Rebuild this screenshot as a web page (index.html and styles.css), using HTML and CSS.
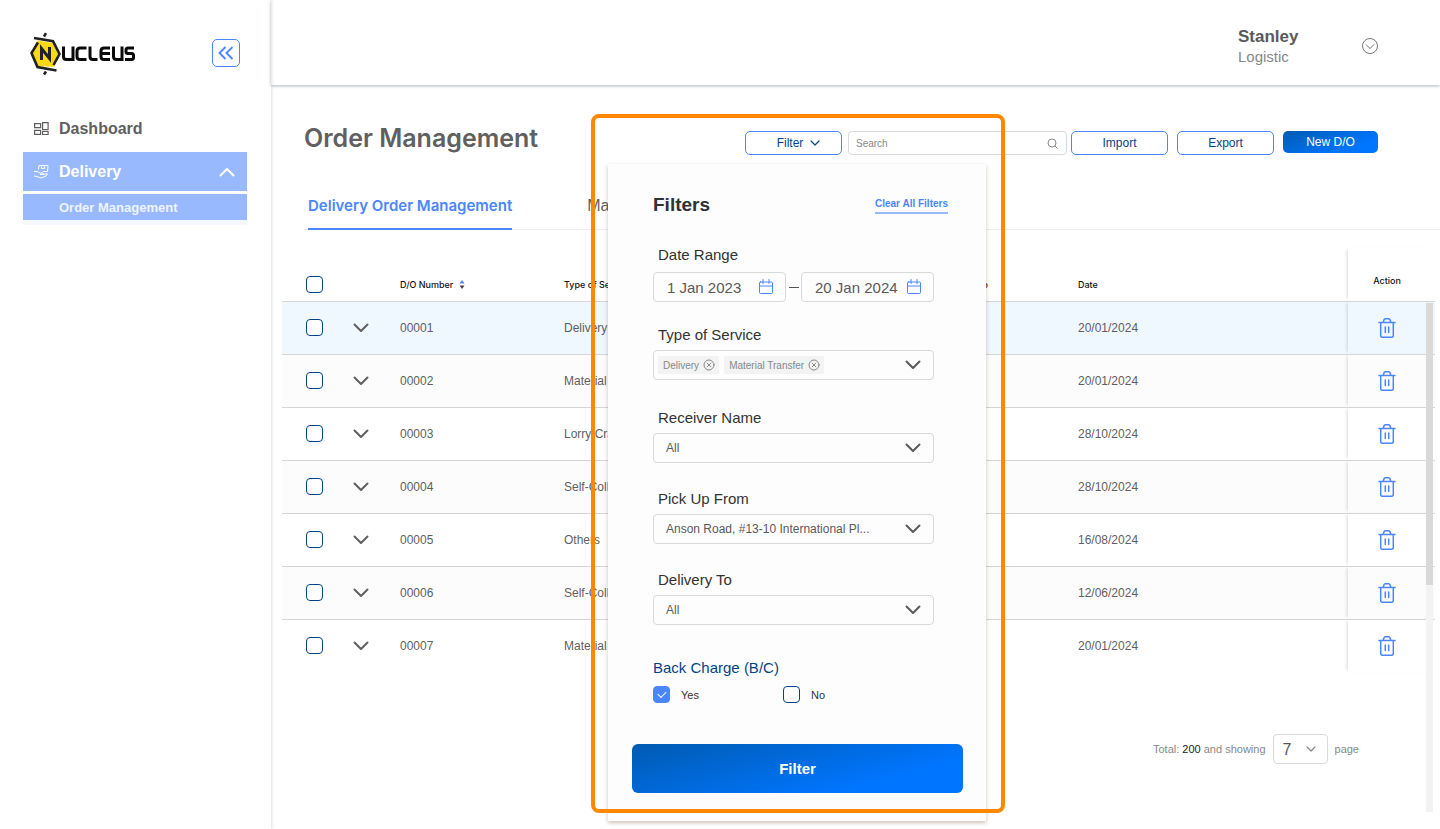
FILE: index.html
```html
<!DOCTYPE html>
<html lang="en">
<head>
<meta charset="utf-8">
<title>Order Management</title>
<link rel="stylesheet" href="styles.css">
</head>
<body>
<svg class="sprite" aria-hidden="true">
  <symbol id="chevron" viewBox="0 0 16 10"><path d="M1.500 1.500 8 8l6.500-6.500" fill="none" stroke="currentColor" stroke-width="2" stroke-linecap="round" stroke-linejoin="round"/></symbol>
  <symbol id="chevron-thin" viewBox="0 0 10 6"><path d="M1 1l4 4 4-4" fill="none" stroke="currentColor" stroke-width="1.200" stroke-linecap="round" stroke-linejoin="round"/></symbol>
  <symbol id="calendar" viewBox="0 0 14 16"><path d="M1.500 3h11q1 0 1 1v9.500q0 1-1 1h-11q-1 0-1-1V4q0-1 1-1zM.5 7h13M4 .5v4M10 .5v4" fill="none" stroke="currentColor" stroke-linecap="round"/></symbol>
  <symbol id="clear" viewBox="0 0 12 12"><g fill="none" stroke="currentColor" stroke-linecap="round"><circle cx="6" cy="6" r="5"/><path d="M4.200 4.200l3.600 3.600M7.800 4.200 4.200 7.800"/></g></symbol>
  <symbol id="trash" viewBox="0 0 18 20"><g fill="none" stroke="currentColor" stroke-width="1.500" stroke-linecap="round" stroke-linejoin="round"><path d="M1 4.500h16M2.700 4.700v12.500q0 2 1.500 2h9.600q1.500 0 1.500-2V4.700M5.200 4.300l.8-2.500q.3-1 1.300-1h3.400q1 0 1.300 1l.8 2.500M7.300 9v5.500M10.700 9v5.500"/></g></symbol>
</svg>
<div class="app">
  <aside class="sidebar">
    <div class="brand">
      <a class="logo" href="#" aria-label="Nucleus">
        <svg class="logo-mark" viewBox="0 0 106 44" aria-hidden="true">
          <path d="M7 9.500 23 12l7 11-6 13-16-1L2 22z" fill="#fbd916"/>
          <path d="M4 7 23 10.200 29.500 23 23.500 34M8 11.500 1.500 22l6 14 19 3.500M16 2.200l-2 3.300M16 40.500l-2 3" fill="none" stroke="#222" stroke-width="2.600"/>
          <path d="M11.500 29V17.500l8 10V16" fill="none" stroke="#222" stroke-width="3"/>
          <path d="M33.500 15.500v10q0 3 3 3h6.500v-13M56.500 17h-6.500q-3 0-3 3v5.500q0 3 3 3h6.500M60 15.500v10q0 3 3 3h4.500M80 17h-6q-3 0-3 3v5.500q0 3 3 3h6M71 22.500h9M83.500 15.500v10q0 3 3 3h5.500v-13M104 17h-6q-2 0-2 2v1.500q0 2 2 2h3.500q2 0 2 2v2q0 2-2 2h-6.500" fill="none" stroke="#0a0a0a" stroke-width="3"/>
        </svg>
      </a>
      <button class="collapse" aria-label="Collapse sidebar"><svg width="16" height="14" viewBox="0 0 16 14"><path d="M7.500 1 1.500 7l6 6M14.500 1l-6 6 6 6" fill="none" stroke="currentColor" stroke-width="1.800"/></svg></button>
    </div>
    <nav class="menu">
      <a class="menu-item" href="#"><svg width="15" height="13" viewBox="0 0 15 13" fill="none" stroke="currentColor" stroke-width="1.200"><path d="M.6 1.600h6v4h-6zM.6 8.400h6v4h-6zM8.600.6h5.500v7H8.600zM8.600 9.500h5.500v3H8.600z"/></svg>Dashboard</a>
      <a class="menu-item active" href="#"><svg width="15" height="14" viewBox="0 0 15 14" fill="none" stroke="currentColor"><path d="M4.500 4.500l.5-4h9l-.5 6H9M7.500.5v3h3v-3M0 6.500h3l3 1.500h3q1 1-1 1.500H6M0 11l3 .5 4 1.500 5-2 1.500-2q0-1-2 0l-2.500.5"/></svg>Delivery<svg class="menu-arrow" width="16" height="10"><use href="#chevron"/></svg></a>
      <a class="menu-sub" href="#">Order Management</a>
    </nav>
  </aside>
  <div class="main">
    <header class="topbar">
      <div class="user"><strong>Stanley</strong><span>Logistic</span></div>
      <button class="user-toggle" aria-label="Account menu"><svg width="16" height="16" viewBox="0 0 16 16" fill="none" stroke="currentColor"><circle cx="8" cy="8" r="7.500"/><path d="M4 6.500l4 4 4-4"/></svg></button>
    </header>
    <main class="content">
      <div class="page-head">
        <h1>Order Management</h1>
        <div class="tools">
          <button class="btn btn-filter">Filter<svg width="10" height="6"><use href="#chevron-thin"/></svg></button>
          <label class="search"><input type="search" placeholder="Search" aria-label="Search"><svg width="11" height="11" viewBox="0 0 11 11" fill="none" stroke="currentColor"><circle cx="5" cy="5" r="4"/><path d="M8 8l2.500 2.500"/></svg></label>
          <button class="btn btn-import">Import</button>
          <button class="btn btn-export">Export</button>
          <button class="btn btn-primary">New D/O</button>
          <form class="filters">
            <div class="filters-head"><h2>Filters</h2><a href="#">Clear All Filters</a></div>
            <fieldset class="field dates">
              <legend>Date Range</legend>
              <div class="date-row">
                <label class="box"><input type="text" value="1 Jan 2023" aria-label="From date"><svg width="14" height="16"><use href="#calendar"/></svg></label>
                <span class="dash"></span>
                <label class="box"><input type="text" value="20 Jan 2024" aria-label="To date"><svg width="14" height="16"><use href="#calendar"/></svg></label>
              </div>
            </fieldset>
            <div class="field service">
              <span class="field-label" id="service-label">Type of Service</span>
              <div class="box tags" role="group" aria-labelledby="service-label">
                <span class="tag">Delivery<button type="button" aria-label="Remove Delivery"><svg width="12" height="12"><use href="#clear"/></svg></button></span>
                <span class="tag">Material Transfer<button type="button" aria-label="Remove Material Transfer"><svg width="12" height="12"><use href="#clear"/></svg></button></span>
                <button type="button" class="open" aria-label="Show services"><svg width="16" height="10"><use href="#chevron"/></svg></button>
              </div>
            </div>
            <div class="field receiver">
              <label class="field-label" for="receiver">Receiver Name</label>
              <div class="box pick"><select id="receiver"><option>All</option></select><svg width="16" height="10"><use href="#chevron"/></svg></div>
            </div>
            <div class="field">
              <label class="field-label" for="pickup">Pick Up From</label>
              <div class="box pick"><select id="pickup"><option>Anson Road, #13-10 International Pl...</option></select><svg width="16" height="10"><use href="#chevron"/></svg></div>
            </div>
            <div class="field">
              <label class="field-label" for="deliver">Delivery To</label>
              <div class="box pick"><select id="deliver"><option>All</option></select><svg width="16" height="10"><use href="#chevron"/></svg></div>
            </div>
            <fieldset class="charge">
              <legend>Back Charge (B/C)</legend>
              <div class="charge-row">
                <label><input type="checkbox" class="check" checked>Yes</label>
                <label><input type="checkbox" class="check">No</label>
              </div>
            </fieldset>
            <button type="button" class="apply">Filter</button>
          </form>
          <div class="highlight"></div>
        </div>
      </div>
      <nav class="tabs"><a class="tab current" href="#">Delivery Order Management</a><a class="tab" href="#">Material</a></nav>
      <div class="table-area">
        <table>
          <colgroup><col class="c-check"><col class="c-open"><col class="c-number"><col class="c-type"><col class="c-to"><col class="c-date"><col class="c-action"></colgroup>
          <thead><tr><th><input type="checkbox" class="check" aria-label="Select all"></th><th></th><th>D/O Number<svg class="sort" width="6" height="9" viewBox="0 0 6 9"><path d="M3 0l2.500 3.500h-5z" fill="#4a86ff"/><path d="M3 9l2.500-3.500h-5z" fill="#444"/></svg></th><th>Type of Service</th><th class="to">Delivery To</th><th>Date</th><th class="action">Action</th></tr></thead>
          <tbody>
            <tr class="selected"><td><input type="checkbox" class="check" aria-label="Select 00001"></td><td><button class="icon" aria-label="Expand 00001"><svg width="16" height="10"><use href="#chevron"/></svg></button></td><td>00001</td><td>Delivery</td><td></td><td>20/01/2024</td><td class="action"><button class="icon trash" aria-label="Delete 00001"><svg width="18" height="20"><use href="#trash"/></svg></button></td></tr>
            <tr><td><input type="checkbox" class="check" aria-label="Select 00002"></td><td><button class="icon" aria-label="Expand 00002"><svg width="16" height="10"><use href="#chevron"/></svg></button></td><td>00002</td><td>Material Transfer</td><td></td><td>20/01/2024</td><td class="action"><button class="icon trash" aria-label="Delete 00002"><svg width="18" height="20"><use href="#trash"/></svg></button></td></tr>
            <tr><td><input type="checkbox" class="check" aria-label="Select 00003"></td><td><button class="icon" aria-label="Expand 00003"><svg width="16" height="10"><use href="#chevron"/></svg></button></td><td>00003</td><td>Lorry Crane</td><td></td><td>28/10/2024</td><td class="action"><button class="icon trash" aria-label="Delete 00003"><svg width="18" height="20"><use href="#trash"/></svg></button></td></tr>
            <tr><td><input type="checkbox" class="check" aria-label="Select 00004"></td><td><button class="icon" aria-label="Expand 00004"><svg width="16" height="10"><use href="#chevron"/></svg></button></td><td>00004</td><td>Self-Collect</td><td></td><td>28/10/2024</td><td class="action"><button class="icon trash" aria-label="Delete 00004"><svg width="18" height="20"><use href="#trash"/></svg></button></td></tr>
            <tr><td><input type="checkbox" class="check" aria-label="Select 00005"></td><td><button class="icon" aria-label="Expand 00005"><svg width="16" height="10"><use href="#chevron"/></svg></button></td><td>00005</td><td>Others</td><td></td><td>16/08/2024</td><td class="action"><button class="icon trash" aria-label="Delete 00005"><svg width="18" height="20"><use href="#trash"/></svg></button></td></tr>
            <tr><td><input type="checkbox" class="check" aria-label="Select 00006"></td><td><button class="icon" aria-label="Expand 00006"><svg width="16" height="10"><use href="#chevron"/></svg></button></td><td>00006</td><td>Self-Collect</td><td></td><td>12/06/2024</td><td class="action"><button class="icon trash" aria-label="Delete 00006"><svg width="18" height="20"><use href="#trash"/></svg></button></td></tr>
            <tr><td><input type="checkbox" class="check" aria-label="Select 00007"></td><td><button class="icon" aria-label="Expand 00007"><svg width="16" height="10"><use href="#chevron"/></svg></button></td><td>00007</td><td>Material Transfer</td><td></td><td>20/01/2024</td><td class="action"><button class="icon trash" aria-label="Delete 00007"><svg width="18" height="20"><use href="#trash"/></svg></button></td></tr>
          </tbody>
        </table>
        <div class="pager"><label for="per-page">Total: <b>200</b> and showing</label><div class="pager-pick"><select id="per-page"><option>7</option></select><svg width="10" height="6"><use href="#chevron-thin"/></svg></div><span>page</span></div>
        <div class="scrollbar"><div class="thumb"></div></div>
      </div>
    </main>
  </div>
</div>
</body>
</html>
```
FILE: styles.css
```css
* { box-sizing: border-box; }
body { margin: 0; background: #fff; color: #5f5f5f; font-family: "Liberation Sans", Arial, sans-serif; font-size: 12px; overflow-x: hidden; }
button, input, select { font: inherit; color: inherit; margin: 0; }
button { padding: 0; border: 0; background: none; cursor: pointer; }
a { color: inherit; text-decoration: none; }
h1, h2 { margin: 0; }
svg { display: block; flex: none; }
fieldset { margin: 0; padding: 0; border: 0; min-width: 0; }
.sprite { position: absolute; width: 0; height: 0; }

.app { display: grid; grid-template-columns: 271px minmax(0, 1fr); min-height: 100vh; }

.sidebar { box-shadow: 1px 0 3px rgba(0, 0, 0, .12); }
.brand { display: flex; justify-content: space-between; align-items: center; padding: 30px 31px 0 30px; height: 76px; }
.logo-mark { width: 106px; height: 44px; overflow: visible; }
.collapse { display: grid; place-items: center; width: 28px; height: 28px; border: 1px solid #4a86ff; border-radius: 5px; color: #4a86ff; background: #fdfdfd; }
.menu { padding: 33px 24px 0 23px; }
.menu-item { display: flex; align-items: center; gap: 10px; height: 39px; padding: 0 12px 0 11px; font-size: 16px; font-weight: 700; }
.menu-item.active { margin-top: 4px; background: #99b9ff; color: #fff; }
.menu-arrow { margin-left: auto; transform: rotate(180deg); }
.menu-sub { display: flex; align-items: center; height: 26px; margin-top: 3px; padding-left: 36px; background: #99b9ff; color: #edf3ff; font-size: 13px; font-weight: 700; box-shadow: 0 5px 0 #f5f9ff; }

.topbar { display: flex; justify-content: flex-end; align-items: flex-start; gap: 63px; height: 85px; padding: 27px 62px 0 0; box-shadow: 0 1px 3px rgba(70, 90, 100, .45); }
.user { display: flex; flex-direction: column; width: 61px; color: #888; font-size: 15px; line-height: 20px; white-space: nowrap; }
.user strong { color: #5a5a5a; font-size: 17px; }
.user-toggle { margin-top: 11px; color: #777; }

.page-head { display: flex; justify-content: space-between; align-items: flex-start; padding: 37px 62px 0 33px; height: 100px; }
h1 { font-family: Inter, sans-serif; font-size: 25px; line-height: 32px; font-weight: 600; color: #606060; white-space: nowrap; }
.tools { position: relative; display: flex; align-items: flex-start; margin-top: 9px; }
.btn { display: flex; align-items: center; justify-content: center; width: 97px; height: 24px; border: 1px solid #4a86ff; border-radius: 5px; background: #fff; color: #024488; font-size: 12px; }
.btn-filter { gap: 7px; padding-left: 10px; margin-right: 6px; }
.btn-import { margin: 0 9px 0 4px; }
.btn-export { margin-right: 9px; }
.btn-primary { width: 95px; height: 22px; border: 0; background: linear-gradient(160deg, #005bb1, #0075ff 75%); color: #fff; }
.search { display: flex; align-items: center; width: 219px; height: 24px; padding: 0 8px 0 7px; border: 1px solid #d9d9d9; border-radius: 4px; color: #888; background: #fff; }
.search input { flex: 1; min-width: 0; padding: 0; border: 0; outline: 0; background: none; font-size: 10px; }
.search input::placeholder { color: #888; }

.filters { position: absolute; z-index: 2; top: 33px; right: 392px; width: 378px; padding: 31px 52px 28px 45px; background: #fdfdfd; box-shadow: 0 2px 4px rgba(110, 50, 20, .3); }
.filters-head { display: flex; justify-content: space-between; align-items: center; margin-right: -14px; height: 20px; }
h2 { color: #2f3133; font-size: 19px; }
.filters-head a { color: #4a86ff; font-size: 10px; font-weight: 700; line-height: 16px; border-bottom: 2px solid #99b9ff; }
.field { margin-top: 27px; color: #333; }
.field legend, .field-label { display: block; padding: 0 0 0 5px; font-size: 15px; line-height: 18px; }
.dates { margin-top: 31px; }
.service { margin-top: 24px; }
.receiver { margin-top: 29px; }
.box { display: flex; align-items: center; height: 30px; border: 1px solid #d9d9d9; border-radius: 4px; background: #fdfdfd; color: #5a5a5a; }
.date-row { display: flex; align-items: center; justify-content: space-between; margin-top: 8px; }
.date-row .box { width: 133px; padding: 0 12px 0 13px; font-size: 15px; }
.date-row input { flex: 1; min-width: 0; padding: 0; border: 0; outline: 0; background: none; }
.date-row svg { color: #4a86ff; }
.dash { width: 10px; border-top: 1px solid #555; }
.tags { margin-top: 6px; padding: 0 12px 0 4px; gap: 5px; }
.tag { display: flex; align-items: center; gap: 4px; height: 18px; padding: 0 4px 0 5px; border-radius: 2px; background: #f3f3f3; color: #888; font-size: 10px; }
.open { margin-left: auto; }
.pick { position: relative; margin-top: 6px; }
.pick select { width: 100%; height: 28px; padding: 0 40px 0 12px; border: 0; outline: 0; background: none; appearance: none; font-size: 12px; }
.pick svg { position: absolute; right: 12px; pointer-events: none; }
.charge { margin-top: 33px; color: #333; font-size: 11px; }
.charge legend { padding: 0; color: #024488; font-size: 15px; line-height: 20px; }
.charge-row { display: grid; grid-template-columns: 130px 1fr; margin-top: 8px; }
.charge-row label { display: flex; align-items: center; gap: 11px; }
.apply { display: block; width: 331px; height: 49px; margin: 41px 0 0 -21px; border-radius: 6px; background: linear-gradient(165deg, #005bb1, #0075ff 75%); color: #fff; font-size: 15px; font-weight: 700; }
.highlight { position: absolute; z-index: 3; top: -17px; right: 373px; width: 414px; height: 699px; border: 4px solid #ff8800; border-radius: 8px; pointer-events: none; }

.check { appearance: none; display: block; width: 17px; height: 17px; border: 1px solid #024488; border-radius: 4px; background: #fff; }
.check:checked { border-color: #4a86ff; background: #4a86ff; display: grid; place-items: center; }
.check:checked::after { content: ""; width: 7px; height: 4px; margin-bottom: 2px; border: solid #fff; border-width: 0 0 1px 1px; transform: rotate(-45deg); }

.tabs { display: flex; gap: 75px; margin-left: 33px; padding-left: 4px; height: 45px; border-bottom: 1px solid #eee; font-size: 16px; }
.tab { display: flex; padding-top: 11px; height: 45px; line-height: 20px; white-space: nowrap; }
.tab.current { color: #4a86ff; font-family: Inter, sans-serif; font-size: 15px; font-weight: 600; border-bottom: 2px solid #4a86ff; }

.table-area { position: relative; padding: 18px 5px 0 11px; }
table { width: 100%; border-collapse: collapse; table-layout: fixed; }
.c-check { width: 71px; }
.c-open { width: 47px; }
.c-number { width: 164px; }
.c-date { width: 270px; }
.c-action { width: 87px; }
.c-type { width: 160px; }
th { height: 53px; padding: 20px 0 0; text-align: left; color: #111; font-family: Inter, sans-serif; font-size: 9px; font-weight: 500; white-space: nowrap; }
td { height: 53px; padding: 0; border-top: 1px solid #d5d5d5; white-space: nowrap; }
th:first-child, td:first-child { padding-left: 24px; }
th.to { text-align: right; padding-right: 90px; }
th.action { padding-top: 12px; }
.sort { display: inline-block; margin-left: 6px; vertical-align: -1px; }
tbody tr:nth-child(even) { background: #fcfcfc; }
tbody tr.selected { background: #eff7ff; }
.action { padding-right: 9px; text-align: center; box-shadow: -3px 0 3px -2px rgba(0, 0, 0, .15); }
.icon { display: block; color: #5f5f5f; }
.trash { margin: 0 auto; color: #4a86ff; }

.pager { display: flex; justify-content: flex-end; align-items: center; gap: 7px; margin-top: 62px; padding-right: 76px; color: #888; font-size: 11px; }
.pager b { color: #222; font-weight: 400; }
.pager-pick { position: relative; display: flex; align-items: center; width: 55px; height: 30px; border: 1px solid #d9d9d9; border-radius: 4px; }
.pager-pick select { width: 100%; height: 28px; padding: 0 0 0 9px; border: 0; outline: 0; background: none; appearance: none; color: #555; font-size: 16px; }
.pager-pick svg { position: absolute; right: 11px; pointer-events: none; }
.scrollbar { position: absolute; top: 73px; right: 7px; width: 7px; height: 509px; background: #f3f3f3; }
.thumb { height: 282px; background: #d9d9d9; }
```
